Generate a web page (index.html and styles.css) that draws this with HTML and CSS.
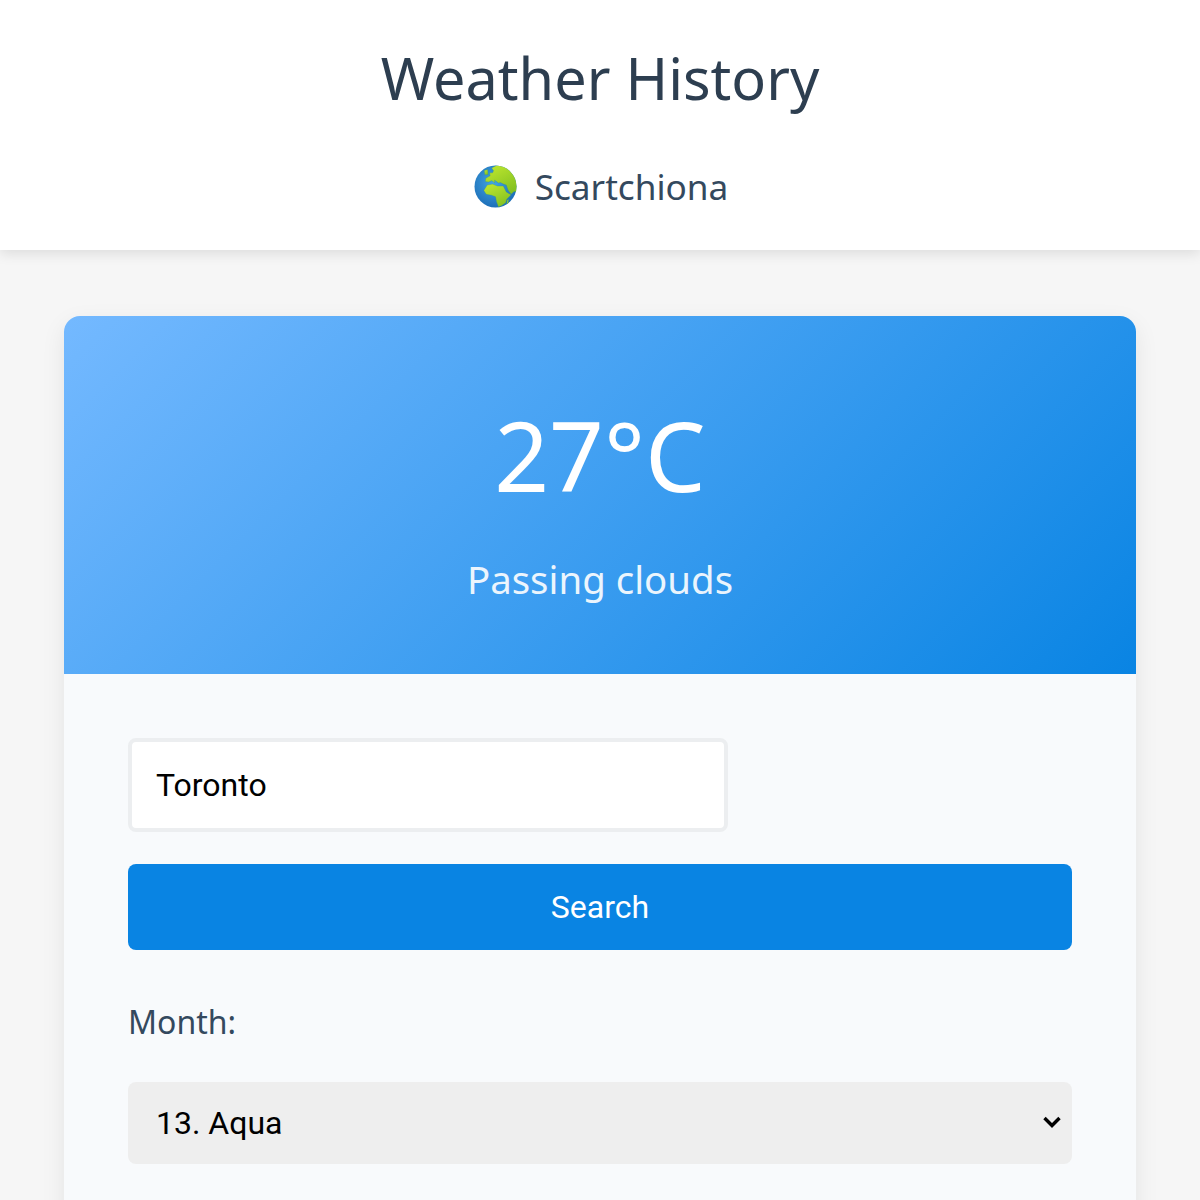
FILE: index.html
```html
<!DOCTYPE html>
<html lang="en">
<head>
<meta charset="utf-8">
<title>Weather History</title>
<link rel="stylesheet" href="styles.css">
</head>
<body>
<header class="site-header">
  <h1 class="title">Weather History</h1>
  <div class="location">
    <svg class="globe" viewBox="0 0 44 44" aria-hidden="true">
      <defs>
        <radialGradient id="sea" cx="45%" cy="40%" r="62%"><stop offset="0" stop-color="#43a6e6"/><stop offset="1" stop-color="#1c6db6"/></radialGradient>
        <linearGradient id="land" x1="0.200" y1="0" x2="0.800" y2="1"><stop offset="0" stop-color="#bde62e"/><stop offset="1" stop-color="#7fbe20"/></linearGradient>
        <clipPath id="disc"><circle cx="22" cy="22" r="21.500"/></clipPath>
      </defs>
      <circle cx="22" cy="22" r="21.500" fill="url(#sea)"/>
      <g clip-path="url(#disc)" fill="url(#land)" stroke="#2a8a8e" stroke-width=".3">
        <path d="M18 3 24 0 34 1 46 14 46 28 41 27 38 30 35 26 33 20.500 30 19.500 27 18 25 18.500 23 17 21 15.500 21.500 18.500 18 16 15 17.500 11.500 17 12 13.500 16.500 11 16 8 19 8 20 6Z"/>
        <path d="M10 26 13.500 20.500 19 19.500 24 21.500 30 21.500 33 27.500 38 30.500 33.500 35 32.500 38.500 28.500 41.500 25 43 23 37.500 22 32.500 18 31 12.500 30Z"/>
        <path d="M10.500 5.500 14 4.500 14.500 10 11 10Z"/>
        <path d="M34 36 35.500 35 35 40 33.500 40Z"/>
      </g>
    </svg>
    <span class="location-name">Scartchiona</span>
  </div>
</header>
<main class="page">
  <section class="card">
    <div class="hero">
      <div class="temp">27°C</div>
      <div class="condition">Passing clouds</div>
    </div>
    <div class="body">
      <input class="city" type="text" value="Toronto">
      <button class="search" type="button">Search</button>
      <label class="label" for="month">Month:</label>
      <div class="select-wrap">
        <select class="select" id="month"><option>13. Aqua</option></select>
        <svg class="chevron" viewBox="0 0 20 14" aria-hidden="true"><path d="M2.500 3 10 10.500 17.500 3" fill="none" stroke="#000" stroke-width="3.400"/></svg>
      </div>
    </div>
  </section>
</main>
</body>
</html>
```
FILE: styles.css
```css
* { box-sizing: border-box; }
html, body { margin: 0; padding: 0; }
body { background: #f6f6f6; font-family: "Noto Sans", sans-serif; color: #2d3e50; }

.site-header {
  height: 250px;
  background: #fff;
  box-shadow: 0 4px 12px rgba(0, 0, 0, .1);
  padding-top: 39px;
  text-align: center;
}
.title { margin: 0; font-size: 57.6px; line-height: 78px; font-weight: 400; color: #2d3e50; }
.location {
  margin-top: 45px;
  padding-left: 2px;
  display: flex;
  justify-content: center;
  align-items: center;
  gap: 18px;
  height: 48px;
  font-size: 35.2px;
  color: #34495e;
}
.globe { width: 43px; height: 43px; display: block; }

.page { padding: 66px 64px 0; }
.card {
  border-radius: 16px;
  overflow: hidden;
  background: #f8fafc;
  box-shadow: 0 8px 24px rgba(0, 0, 0, .08);
}
.hero {
  height: 358px;
  padding-top: 77px;
  text-align: center;
  color: #fff;
  background: linear-gradient(135deg, #74b9ff, #0984e3);
}
.temp { font-size: 96px; line-height: 124px; }
.condition { margin-top: 36px; font-size: 38.4px; line-height: 52px; opacity: .9; }

.body { padding: 64px; }
.city {
  display: block;
  width: 600px;
  height: 94px;
  padding: 0 24px;
  border: 4px solid #eceef0;
  border-radius: 8px;
  background: #fff;
  font-family: Roboto, sans-serif;
  font-size: 32px;
  color: #000;
}
.search {
  display: block;
  width: 100%;
  height: 86px;
  margin-top: 32px;
  border: 0;
  border-radius: 8px;
  background: #0984e3;
  color: #fff;
  font-family: Roboto, sans-serif;
  font-size: 32px;
}
.label { display: block; margin-top: 32px; font-size: 32px; line-height: 80px; color: #34495e; }
.select-wrap { position: relative; margin-top: 20px; }
.select {
  display: block;
  width: 100%;
  height: 82px;
  padding: 0 28px;
  border: 0;
  border-radius: 8px;
  background: #eee;
  font-family: Roboto, sans-serif;
  font-size: 32px;
  color: #000;
  appearance: none;
}
.chevron { position: absolute; right: 10px; top: 33px; width: 20px; height: 14px; }
```
